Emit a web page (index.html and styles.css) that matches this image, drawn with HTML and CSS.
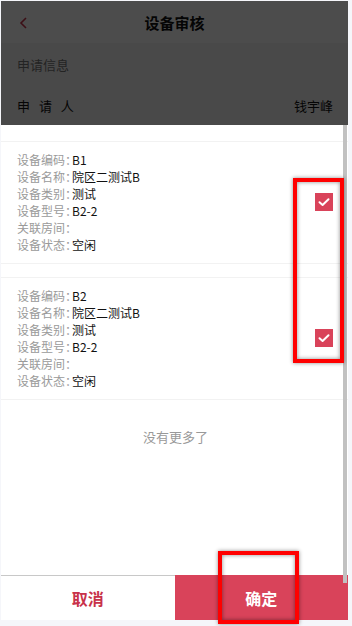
FILE: index.html
```html
<!DOCTYPE html>
<html lang="zh-CN">
<head>
<meta charset="utf-8">
<title>设备审核</title>
<link rel="stylesheet" href="styles.css">
</head>
<body>
<div class="app">
  <div class="page">
    <header class="nav">
      <svg class="back" width="10" height="12" viewBox="0 0 10 12"><path d="M7 1 L2 6 L7 11" fill="none" stroke="#c8324a" stroke-width="1.6"/></svg>
      <h1 class="nav-title">设备审核</h1>
    </header>
    <div class="sec-title">申请信息</div>
    <div class="info-row"><span class="spaced">申 请 人</span><span>钱宇峰</span></div>
  </div>
  <div class="sheet">
    <div class="list">
      <div class="card">
        <div class="fields">
          <div class="field"><span class="label">设备编码：</span><span class="value">B1</span></div>
          <div class="field"><span class="label">设备名称：</span><span class="value">院区二测试B</span></div>
          <div class="field"><span class="label">设备类别：</span><span class="value">测试</span></div>
          <div class="field"><span class="label">设备型号：</span><span class="value">B2-2</span></div>
          <div class="field"><span class="label">关联房间：</span><span class="value"></span></div>
          <div class="field"><span class="label">设备状态：</span><span class="value">空闲</span></div>
        </div>
        <span class="check"><svg width="18" height="18" viewBox="0 0 18 18"><path d="M4.5 9.2 L7.6 12 L13.5 6.3" fill="none" stroke="#fff" stroke-width="2" stroke-linecap="round" stroke-linejoin="round"/></svg></span>
      </div>
      <div class="card">
        <div class="fields">
          <div class="field"><span class="label">设备编码：</span><span class="value">B2</span></div>
          <div class="field"><span class="label">设备名称：</span><span class="value">院区二测试B</span></div>
          <div class="field"><span class="label">设备类别：</span><span class="value">测试</span></div>
          <div class="field"><span class="label">设备型号：</span><span class="value">B2-2</span></div>
          <div class="field"><span class="label">关联房间：</span><span class="value"></span></div>
          <div class="field"><span class="label">设备状态：</span><span class="value">空闲</span></div>
        </div>
        <span class="check"><svg width="18" height="18" viewBox="0 0 18 18"><path d="M4.5 9.2 L7.6 12 L13.5 6.3" fill="none" stroke="#fff" stroke-width="2" stroke-linecap="round" stroke-linejoin="round"/></svg></span>
      </div>
      <div class="nomore">没有更多了</div>
    </div>
    <div class="actions">
      <button class="btn btn-cancel">取消</button>
      <button class="btn btn-ok">确定</button>
    </div>
  </div>
</div>
<div class="scrollbar"></div>
<div class="mark mark-checks"></div>
<div class="mark mark-ok"></div>
</body>
</html>
```
FILE: styles.css
```css
* { box-sizing: border-box; }
html, body { margin: 0; padding: 0; }
body {
  width: 352px;
  height: 626px;
  overflow: hidden;
  background: #f5f6fa;
  font-family: "Noto Sans CJK SC", "Noto Sans", sans-serif;
  color: #222;
  position: relative;
  padding-top: 1px;
}
.app {
  margin-left: 1px;
  width: 347px;
  background: #fff;
}
.page {
  position: relative;
  height: 124px;
  background: #f5f5f5;
}
.page::after {
  content: "";
  position: absolute;
  inset: 0;
  background: rgba(0, 0, 0, 0.7);
}
.nav {
  height: 42px;
  background: #fff;
  display: flex;
  align-items: center;
  justify-content: center;
  position: relative;
}
.back {
  position: absolute;
  left: 18px;
  top: 16px;
}
.nav-title {
  margin: 0;
  font-size: 15px;
  font-weight: 700;
  color: #111;
}
.sec-title {
  height: 42px;
  display: flex;
  align-items: center;
  padding-left: 16px;
  font-size: 13px;
  color: #777;
}
.info-row {
  height: 40px;
  display: flex;
  align-items: center;
  justify-content: space-between;
  padding: 0 15px 0 16px;
  font-size: 13px;
  color: #111;
}
.spaced { letter-spacing: 3px; }
.sheet {
  background: #fff;
}
.list {
  height: 450px;
  padding-top: 16px;
}
.card {
  display: flex;
  align-items: center;
  justify-content: space-between;
  border-top: 1px solid #f2f2f2;
  border-bottom: 1px solid #f2f2f2;
  padding: 9px 15px 10px 16px;
  margin-bottom: 13px;
}
.fields { display: flex; flex-direction: column; }
.field {
  display: flex;
  font-size: 12px;
  line-height: 17px;
  height: 17px;
}
.label {
  color: #9a9a9a;
  white-space: nowrap;
  font-feature-settings: "halt";
  margin-right: 1px;
}
.value { color: #111; }
.check {
  width: 18px;
  height: 18px;
  background: #d9435a;
  display: flex;
}
.nomore {
  text-align: center;
  font-size: 13px;
  color: #999;
  margin-top: 27px;
  padding-left: 2px;
}
.actions {
  display: flex;
  height: 45px;
}
.btn {
  flex: 1;
  border: 0;
  margin: 0;
  font-family: inherit;
  font-size: 16px;
  font-weight: 700;
  padding: 0;
}
.btn-cancel {
  background: #fff;
  color: #c8324a;
  border-top: 1px solid #c8c8c8;
}
.btn-ok {
  background: #d9435a;
  color: #fff;
}
.scrollbar {
  position: absolute;
  left: 343px;
  top: 125px;
  width: 4px;
  height: 458px;
  background: #c1c1c1;
}
.mark {
  position: absolute;
  border: 4px solid #ff0000;
  box-shadow: 0 0 4px rgba(0, 0, 0, 0.45), inset 0 0 4px rgba(0, 0, 0, 0.45);
}
.mark-checks { left: 293px; top: 178px; width: 51px; height: 185px; }
.mark-ok { left: 218px; top: 551px; width: 81px; height: 73px; }
```
